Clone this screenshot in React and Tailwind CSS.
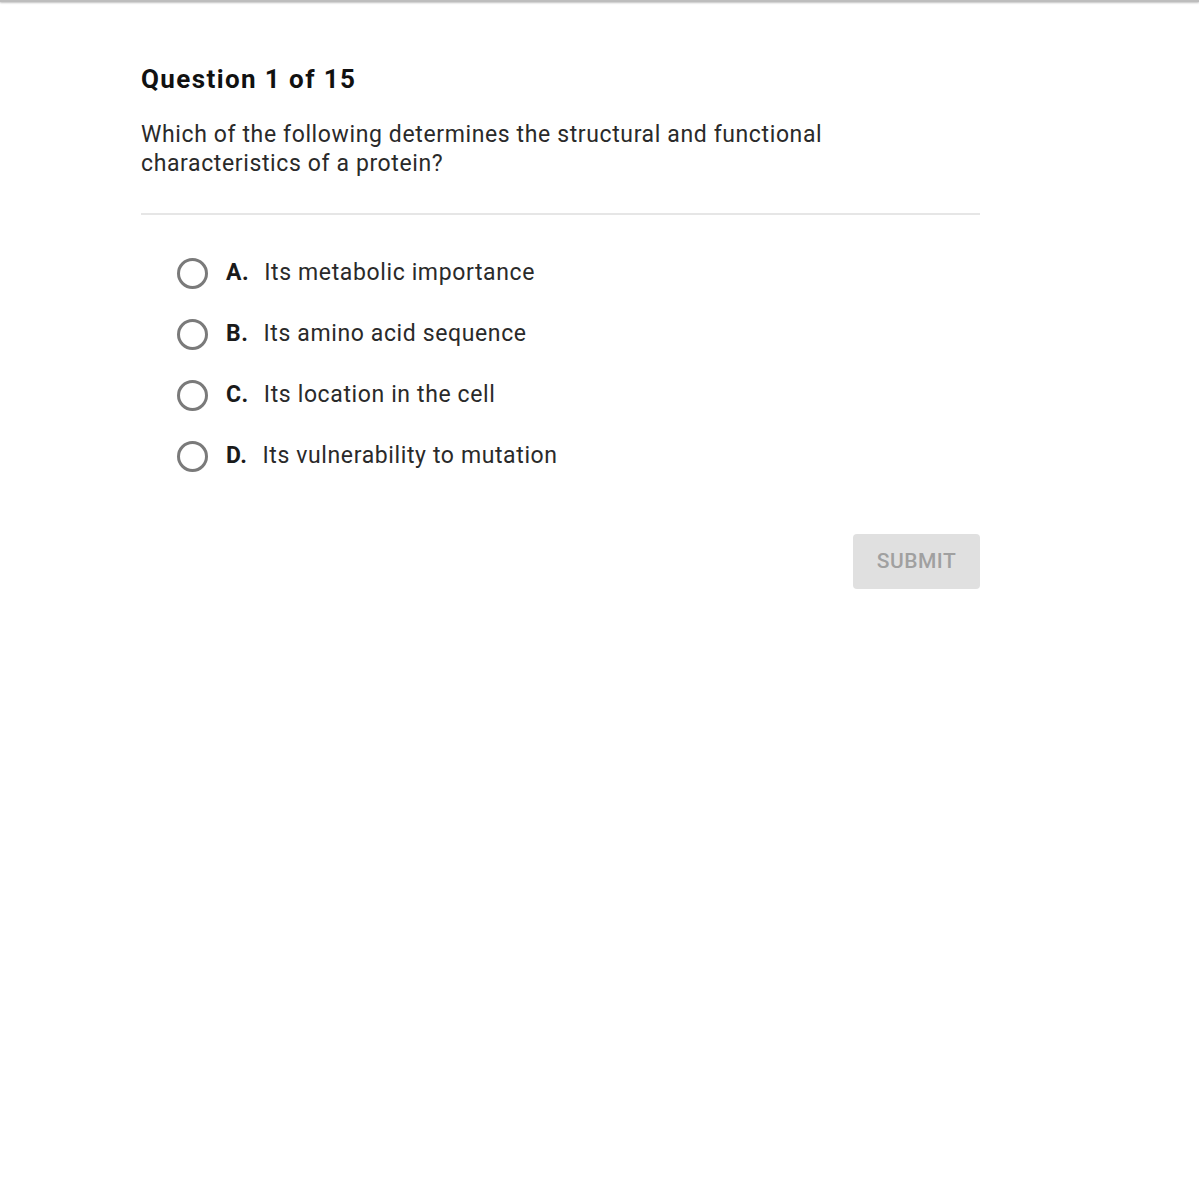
import React, { useState } from 'react';

const options = [
  { letter: 'A.', text: 'Its metabolic importance' },
  { letter: 'B.', text: 'Its amino acid sequence' },
  { letter: 'C.', text: 'Its location in the cell' },
  { letter: 'D.', text: 'Its vulnerability to mutation' },
];

function App() {
  const [selected, setSelected] = useState(null);

  return (
    <div className="min-h-[1200px] bg-white text-[#212121]" style={{ fontFamily: 'Roboto, "Liberation Sans", sans-serif' }}>
      <div className="h-[2px] bg-[#bdbdbd] shadow-[0_1px_2px_rgba(0,0,0,0.25)]" />
      <div className="w-[839px] ml-[141px] pt-[62px]">
        <h1 className="text-[26px] font-bold leading-[30px] tracking-[1.4px] text-[#111]">Question 1 of 15</h1>
        <p className="mt-[26px] text-[23px] leading-[29px] tracking-[0.62px] text-[#2a2a2a] w-[720px]">
          Which of the following determines the structural and functional characteristics of a protein?
        </p>
        <div className="mt-[35px] h-[2px] bg-[#e6e6e6]" />
        <div className="mt-[43px] flex flex-col gap-[31px] pl-[36px]">
          {options.map((o, i) => (
            <label key={o.letter} className="flex items-center h-[30px] cursor-pointer" onClick={() => setSelected(i)}>
              <span className="w-[31px] h-[31px] rounded-full border-[3px] border-[#7a7a7a] flex items-center justify-center">
                {selected === i && <span className="w-[14px] h-[14px] rounded-full bg-[#7a7a7a]" />}
              </span>
              <span className="ml-[18px] text-[23px] font-bold tracking-[0.55px] text-[#1a1a1a]">{o.letter}</span>
              <span className="ml-[15px] text-[23px] tracking-[0.62px] text-[#2a2a2a]">{o.text}</span>
            </label>
          ))}
        </div>
        <div className="flex justify-end mt-[63px]">
          <button className="w-[127px] h-[55px] rounded-[4px] bg-[#e0e0e0] text-[#a0a0a0] text-[21px] tracking-[0.5px] font-medium">
            SUBMIT
          </button>
        </div>
      </div>
    </div>
  );
}

export default App;
